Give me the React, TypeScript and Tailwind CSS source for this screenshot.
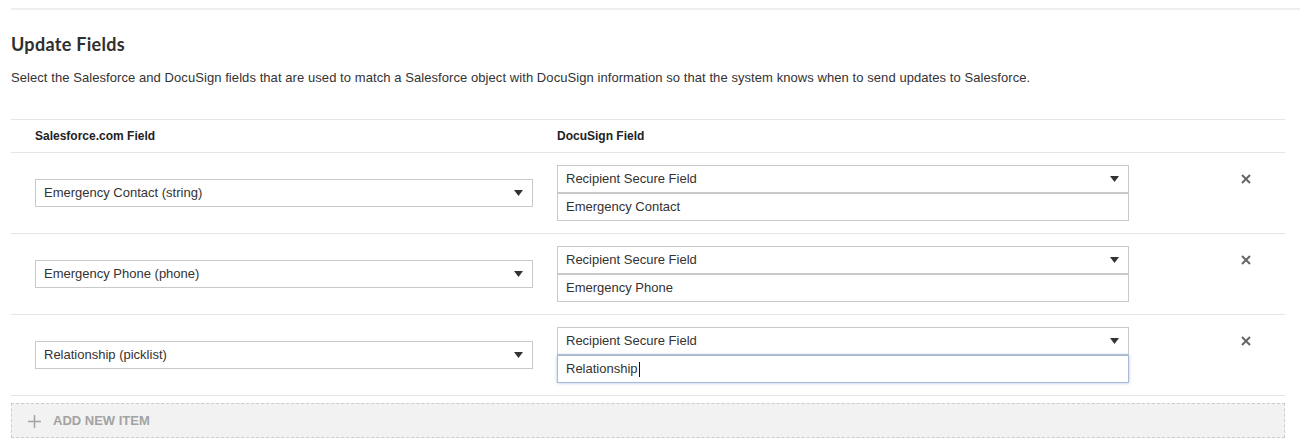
import React from 'react';

type Row = {
  sfField: string;
  dsField: string;
  value: string;
  focused?: boolean;
};

const rows: Row[] = [
  { sfField: 'Emergency Contact (string)', dsField: 'Recipient Secure Field', value: 'Emergency Contact' },
  { sfField: 'Emergency Phone (phone)', dsField: 'Recipient Secure Field', value: 'Emergency Phone' },
  { sfField: 'Relationship (picklist)', dsField: 'Recipient Secure Field', value: 'Relationship', focused: true },
];

const Caret = () => (
  <svg width="9" height="6" viewBox="0 0 9 6" className="shrink-0">
    <path d="M0 0h9L4.5 6z" fill="#333" />
  </svg>
);

const FakeSelect = ({ label, className = '' }: { label: string; className?: string }) => (
  <div
    className={`flex h-[28px] items-center justify-between border border-[#c9c9c9] bg-white pl-[8px] pr-[9px] text-[13px] text-[#333] ${className}`}
  >
    <span>{label}</span>
    <Caret />
  </div>
);

export default function App() {
  return (
    <div className="w-[1308px] bg-white font-['Liberation_Sans',Arial,sans-serif] text-[#333]">
      <div className="pt-[8px]">
        <div className="ml-[11px] mr-[8px] h-[2px] bg-[#eeeeee]" />
      </div>

      <h2 className="ml-[11px] mt-[24px] font-['Lato',sans-serif] text-[18px] font-bold leading-[20px] tracking-[0.3px] text-[#2f2f2f]">
        Update Fields
      </h2>

      <p className="ml-[11px] mt-[16px] text-[13px] leading-[16px] tracking-[0.07px] text-[#333]">
        Select the Salesforce and DocuSign fields that are used to match a Salesforce object with DocuSign information so that the system knows when to send updates to Salesforce.
      </p>

      <div className="ml-[11px] mt-[33px] w-[1274px]">
        {/* header */}
        <div className="flex h-[34px] items-center border-y border-[#e6e6e6] text-[12px] font-bold text-[#222]">
          <div className="w-[534px] pl-[24px]">Salesforce.com Field</div>
          <div className="w-[596px] pl-[12px]">DocuSign Field</div>
        </div>

        {rows.map((r) => (
          <div key={r.value} className="flex h-[81px] border-b border-[#e6e6e6]">
            <div className="flex w-[534px] items-center pl-[24px] pr-[12px]">
              <FakeSelect label={r.sfField} className="w-full" />
            </div>
            <div className="w-[596px] px-[12px] pt-[12px]">
              <FakeSelect label={r.dsField} />
              <div
                className={`flex h-[28px] items-center border bg-white pl-[8px] text-[13px] text-[#333] ${
                  r.focused ? 'border-[#a9b9d6] shadow-[0_0_3px_rgba(102,140,204,0.5)]' : 'border-[#c9c9c9]'
                }`}
              >
                {r.value}
                {r.focused && <span className="ml-px inline-block h-[15px] w-px bg-[#111]" />}
              </div>
            </div>
            <div className="flex flex-1 justify-end pr-[34px] pt-[21px]">
              <button className="h-[10px] w-[10px]" aria-label="Remove">
                <svg width="10" height="10" viewBox="0 0 10 10">
                  <path d="M1 1l8 8M9 1l-8 8" stroke="#666" strokeWidth="2" />
                </svg>
              </button>
            </div>
          </div>
        ))}

        <button className="mt-[7px] flex h-[35px] w-full items-center border border-dashed border-[#cccccc] bg-[#f2f2f2] pl-[16px] text-[13px] font-bold text-[#a3a3a3]">
          <svg width="13" height="13" viewBox="0 0 13 13" className="mr-[12px] mt-[2px]">
            <path d="M6.5 0v13M0 6.5h13" stroke="#a3a3a3" strokeWidth="1.5" />
          </svg>
          ADD NEW ITEM
        </button>
      </div>
    </div>
  );
}
